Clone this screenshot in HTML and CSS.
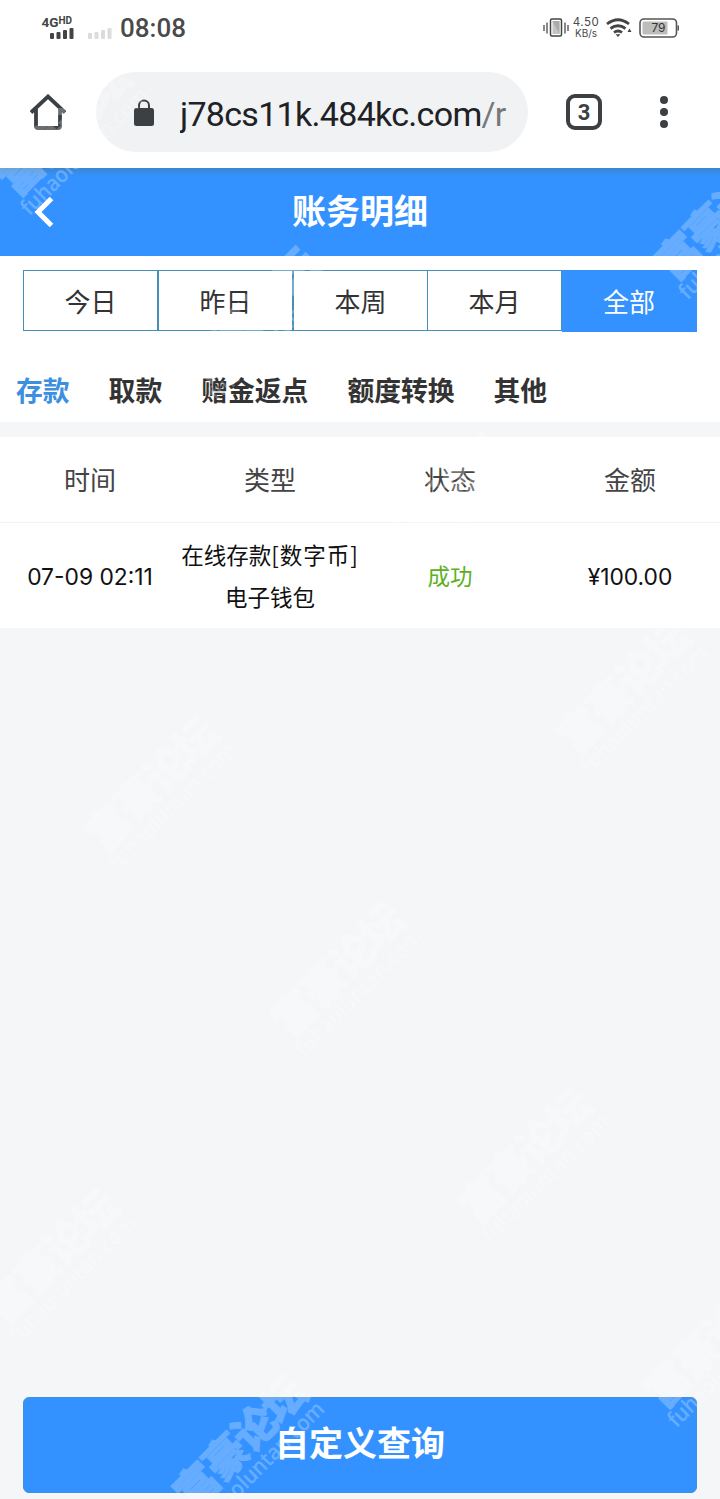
FILE: index.html
```html
<!DOCTYPE html>
<html lang="zh-CN">
<head>
  <meta charset="UTF-8">
  <title>账务明细</title>
  <link rel="stylesheet" href="styles.css">
</head>
<body>
  <div class="phone">
    <div class="status-bar">
      <svg class="signal" width="72" height="28" viewBox="0 0 72 28">
        <text x="1.500" y="12" class="net">4G</text>
        <text x="18.500" y="9" class="hd">HD</text>
        <g fill="#444">
          <rect x="10" y="18" width="4" height="6" rx="1"/>
          <rect x="16.500" y="17" width="4" height="7" rx="1"/>
          <rect x="23" y="15" width="4" height="9" rx="1"/>
          <rect x="29.500" y="13" width="4" height="11" rx="1"/>
        </g>
        <g fill="#dcdcdc">
          <rect x="48" y="18" width="4" height="6" rx="1"/>
          <rect x="54.500" y="17" width="4" height="7" rx="1"/>
          <rect x="61" y="15" width="4" height="9" rx="1"/>
          <rect x="67.500" y="13" width="4" height="11" rx="1"/>
        </g>
      </svg>
      <span class="clock">08:08</span>
      <div class="status-right">
        <svg width="26" height="20" viewBox="0 0 26 20">
          <rect x="7.500" y="1" width="11" height="17" rx="1.500" fill="#fff" stroke="#444" stroke-width="1.500"/>
          <rect x="9.500" y="3" width="7" height="13" fill="#c4c4c4"/>
          <path d="M9.500 3l7 13V3z" fill="#aaa"/>
          <path d="M1 7v6M4 4.500v11M22 4.500v11M25 7v6" stroke="#555" stroke-width="1.400"/>
        </svg>
        <div class="speed"><span>4.50</span><span class="unit">KB/s</span></div>
        <svg class="wifi" width="26" height="20" viewBox="0 0 26 20">
          <path d="M1 6Q12 -2.500 23 6M4.500 10.500Q12 5 19.500 10.500M8 14.500Q12 11.500 16 14.500" fill="none" stroke="#444" stroke-width="2.800"/>
          <path d="M9.500 16.200h5L12 19zM23.500 10.500l2 3.500h-4z" fill="#444"/>
        </svg>
        <svg class="battery" width="41" height="20" viewBox="0 0 41 20">
          <rect x="1" y="1" width="36.500" height="18" rx="4" fill="#fff" stroke="#555" stroke-width="1.600"/>
          <rect x="3.500" y="3.500" width="25" height="13" rx="1" fill="#bdbdbd"/>
          <rect x="38.500" y="7.500" width="1.500" height="5" fill="#555"/>
          <text x="19.500" y="14" text-anchor="middle" class="level">79</text>
        </svg>
      </div>
    </div>

    <div class="browser-bar">
      <svg class="home" width="36" height="36" viewBox="0 0 36 36">
        <path d="M1 18.500L18 2.500L35 18.500M6 15V32Q6 34 8 34H28Q30 34 30 32V15" fill="none" stroke="#3c4043" stroke-width="3.800"/>
      </svg>
      <div class="address">
        <svg width="20" height="27" viewBox="0 0 20 27">
          <rect x="0" y="9" width="20" height="18" rx="2.500" fill="#3c4043"/>
          <path d="M5 10V6.500a5 5 0 0 1 10 0V10" fill="none" stroke="#3c4043" stroke-width="2"/>
        </svg>
        <span class="url">j78cs11k.484kc.com<span class="path">/r</span></span>
      </div>
      <div class="tab-count">3</div>
      <div class="dots"><i></i><i></i><i></i></div>
    </div>

    <div class="page-header">
      <svg class="back" width="20" height="30" viewBox="0 0 20 30">
        <path d="M17.500 1.500L4 15L17.500 28.500" fill="none" stroke="#fff" stroke-width="5"/>
      </svg>
      <h1>账务明细</h1>
    </div>

    <div class="filters">
      <div class="range">
        <div>今日</div>
        <div>昨日</div>
        <div>本周</div>
        <div>本月</div>
        <div class="active">全部</div>
      </div>
      <div class="types">
        <span class="active">存款</span>
        <span>取款</span>
        <span>赠金返点</span>
        <span>额度转换</span>
        <span>其他</span>
      </div>
    </div>

    <div class="records">
      <div class="row head">
        <div>时间</div>
        <div>类型</div>
        <div>状态</div>
        <div>金额</div>
      </div>
      <div class="row">
        <div class="num date">07-09 02:11</div>
        <div class="kind">在线存款<span class="tag">[数字币]</span><br>电子钱包</div>
        <div class="success">成功</div>
        <div class="num">¥100.00</div>
      </div>
    </div>

    <button class="query">自定义查询</button>

    <svg class="watermark" width="720" height="1499" viewBox="0 0 720 1499">
      <defs>
        <g id="mark">
          <text x="0" y="5" class="mark-name" textLength="166" transform="rotate(-45)">富豪论坛</text>
          <text x="-2" y="27" class="mark-site" textLength="170" lengthAdjust="spacingAndGlyphs" transform="rotate(-45)">fuhaoluntan.com</text>
        </g>
      </defs>
      <use href="#mark" x="72" y="136"/>
      <use href="#mark" x="260" y="322"/>
      <use href="#mark" x="446" y="508"/>
      <use href="#mark" x="632" y="694"/>
      <use href="#mark" x="730" y="220"/>
      <use href="#mark" x="160" y="791"/>
      <use href="#mark" x="346" y="977"/>
      <use href="#mark" x="533" y="1163"/>
      <use href="#mark" x="719" y="1348"/>
      <use href="#mark" x="60" y="1264"/>
      <use href="#mark" x="248" y="1450"/>
    </svg>
  </div>
</body>
</html>
```
FILE: styles.css
```css
* {
  box-sizing: border-box;
}

body {
  margin: 0;
  background-color: #f4f6f8;
  color: #333;
  font-family: "Noto Sans CJK SC", sans-serif;
}

.phone {
  position: relative;
  display: flex;
  flex-direction: column;
  width: 720px;
  height: 1499px;
  overflow: hidden;
}

.status-bar {
  display: flex;
  align-items: center;
  height: 56px;
  padding: 0 40px;
  background-color: #fff;
  color: #4a4a4a;
}

.signal {
  margin-top: 1px;
}

.signal text {
  font-family: Roboto, sans-serif;
  font-weight: bold;
  fill: #444;
}

.signal .net {
  font-size: 13.5px;
}

.signal .hd {
  font-size: 10px;
}

.clock {
  margin-left: 8px;
  font-family: Roboto, sans-serif;
  font-size: 26px;
  font-weight: 500;
  line-height: 34px;
}

.status-right {
  display: flex;
  align-items: center;
  margin-left: auto;
}

.speed {
  display: flex;
  flex-direction: column;
  width: 28px;
  margin-left: 3px;
  font-family: Inter, sans-serif;
  font-size: 11.5px;
  line-height: 11px;
  letter-spacing: 0.5px;
  text-align: center;
}

.speed .unit {
  font-size: 10px;
  letter-spacing: 0;
}

.wifi {
  margin-left: 6px;
}

.battery {
  margin-left: 7px;
}

.battery .level {
  font-family: Inter, sans-serif;
  font-size: 12px;
  fill: #333;
}

.browser-bar {
  display: flex;
  align-items: center;
  height: 112px;
  padding-left: 30px;
  background-color: #fff;
}

.address {
  display: flex;
  align-items: center;
  width: 432px;
  height: 80px;
  margin-left: 30px;
  padding-left: 38px;
  border-radius: 40px;
  background-color: #f1f2f4;
}

.url {
  width: 330px;
  margin: 3px 0 0 26px;
  overflow: hidden;
  color: #202124;
  font-family: Roboto, sans-serif;
  font-size: 34px;
  line-height: 48px;
  letter-spacing: -0.7px;
  white-space: nowrap;
}

.url .path {
  color: #75787b;
}

.tab-count {
  width: 36px;
  height: 36px;
  margin-left: 38px;
  border: 4px solid #3c4043;
  border-radius: 9px;
  color: #3c4043;
  font-family: Roboto, sans-serif;
  font-size: 22px;
  font-weight: bold;
  line-height: 29px;
  text-align: center;
}

.dots {
  display: flex;
  flex-direction: column;
  gap: 4px;
  margin-left: 58px;
}

.dots i {
  width: 8px;
  height: 8px;
  border-radius: 50%;
  background-color: #3c4043;
}

.page-header {
  display: flex;
  align-items: center;
  height: 88px;
  padding: 0 34px;
  background: linear-gradient(#3b86d0, #3392ff 8px);
  color: #fff;
}

.page-header h1 {
  flex: 1;
  margin: 0 20px 4px 0;
  font-size: 34px;
  line-height: 50px;
  text-align: center;
}

.filters {
  height: 166px;
  padding: 14px 23px 0;
  background-color: #fff;
}

.range {
  display: grid;
  grid-template-columns: 136px 135px 134px 134px 135px;
  height: 62px;
}

.range div {
  height: 61px;
  border: 1px solid #4590b8;
  border-left-width: 0;
  font-size: 26px;
  line-height: 59px;
  text-align: center;
}

.range div:first-child {
  border-left-width: 1px;
}

.range div:nth-child(-n+2) {
  border-right-width: 2px;
}

.range .active {
  height: 62px;
  border-color: #3392ff;
  background-color: #3392ff;
  color: #fff;
}

.types {
  display: flex;
  gap: 39px;
  margin: 37px 0 0 -7px;
  font-size: 26.8px;
  font-weight: bold;
  line-height: 41px;
}

.types .active {
  color: #3d8fe0;
}

.records {
  margin-top: 15px;
  background-color: #fff;
}

.row {
  display: grid;
  grid-template-columns: repeat(4, 180px);
  align-items: center;
  height: 105px;
  padding-bottom: 2px;
  color: #111;
  font-size: 22.5px;
  text-align: center;
}

.row.head {
  height: 86px;
  border-bottom: 1px solid #f1f2f4;
  color: #444;
  font-size: 26px;
}

.kind {
  line-height: 42px;
  white-space: nowrap;
}

.kind .tag {
  letter-spacing: 1px;
}

.num {
  padding-top: 3px;
  font-family: Inter, sans-serif;
  font-size: 22.8px;
}

.success {
  color: #5cb01e;
}

.query {
  height: 96px;
  margin: auto 23px 6px;
  padding: 0 0 7px;
  border: 1px solid #4290d8;
  border-radius: 6px;
  background-color: #3392ff;
  color: #fff;
  font-family: inherit;
  font-size: 34px;
  font-weight: bold;
}

.watermark {
  position: absolute;
  top: 0;
  left: 0;
  opacity: 0.25;
  pointer-events: none;
}

.watermark text {
  fill: #fff;
  text-anchor: middle;
}

.watermark .mark-name {
  font-size: 43px;
  font-weight: 900;
  stroke: #fff;
  stroke-width: 0.8px;
}

.watermark .mark-site {
  font-family: "Open Sans", sans-serif;
  font-size: 22px;
  font-weight: 600;
}
```
